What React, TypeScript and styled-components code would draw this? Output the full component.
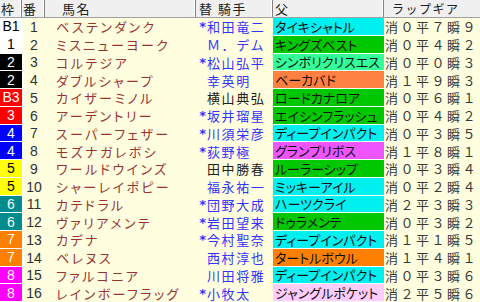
import React from "react";
import styled, { createGlobalStyle } from "styled-components";

const Global = createGlobalStyle`
  html, body { margin: 0; padding: 0; background: #ffffe0; }
  body { font-family: "Noto Sans CJK JP", "Noto Sans", sans-serif; }
`;

const COLS = "22px 23px 151px 77px 111px 96px";

const Table = styled.div`
  width: 480px;
  height: 302px;
  overflow: hidden;
  background: #ffffe0;
  font-family: "Noto Sans CJK JP", sans-serif;
`;

const HeaderRow = styled.div`
  display: grid;
  grid-template-columns: ${COLS};
  height: 17px;
  background: #f0f0f0;
  border-bottom: 1px solid #a0a0a0;
`;

const HeadCell = styled.div<{ $pad?: number; $size?: number; $last?: boolean }>`
  display: flex;
  align-items: center;
  padding-left: ${(p) => p.$pad ?? 2}px;
  font-size: ${(p) => p.$size ?? 13}px;
  letter-spacing: 1.5px;
  color: #202020;
  line-height: 1;
  white-space: nowrap;
  overflow: hidden;
  border-right: ${(p) => (p.$last ? "none" : "1px solid #808080")};
  box-shadow: ${(p) => (p.$last ? "none" : "inset -1px 0 0 #ffffff")};
`;

const Row = styled.div`
  display: grid;
  grid-template-columns: ${COLS};
  height: 17.75px;
`;

const Waku = styled.div<{ $bg: string; $fg: string }>`
  background: ${(p) => p.$bg};
  color: ${(p) => p.$fg};
  border-bottom: 1px solid #ffffff;
  font-family: "Liberation Sans", "Noto Sans", sans-serif;
  font-size: 14px;
  display: flex;
  align-items: center;
  justify-content: center;
  line-height: 1;
`;

const Num = styled.div`
  border-left: 1px solid #ffffff;
  font-family: "Liberation Sans", "Noto Sans", sans-serif;
  font-size: 14px;
  color: #303030;
  display: flex;
  align-items: center;
  justify-content: center;
  line-height: 1;
`;

const Name = styled.div`
  color: #993333;
  font-size: 13px;
  font-feature-settings: "palt";
  letter-spacing: 2.4px;
  padding-left: 11px;
  display: flex;
  align-items: center;
  white-space: nowrap;
  overflow: hidden;
  line-height: 1;
`;

const Jockey = styled.div<{ $black?: boolean }>`
  display: grid;
  grid-template-columns: 11px 1fr;
  align-items: center;
  color: ${(p) => (p.$black ? "#202020" : "#3333ff")};
  font-size: 13px;
  letter-spacing: 1.6px;
  white-space: nowrap;
  overflow: hidden;
  line-height: 1;
`;

const Mark = styled.span`
  display: block;
  font-family: "DejaVu Sans", sans-serif;
  font-size: 13px;
  font-weight: bold;
  line-height: 1;
  letter-spacing: 0;
  text-align: right;
  padding-right: 1px;
`;

const Sire = styled.div<{ $bg: string }>`
  background: ${(p) => p.$bg};
  border-bottom: 1px solid #f4fff4;
  color: #101010;
  font-size: 13px;
  font-feature-settings: "palt";
  letter-spacing: 0;
  padding-left: 2px;
  display: flex;
  align-items: center;
  white-space: nowrap;
  overflow: hidden;
  line-height: 1;
`;

const Gear = styled.div`
  color: #383838;
  font-size: 13px;
  letter-spacing: 2.5px;
  padding-left: 1px;
  display: flex;
  align-items: center;
  white-space: nowrap;
  overflow: hidden;
  line-height: 1;
`;

const WAKU: Record<string, [string, string]> = {
  "1": ["#ffffff", "#000000"],
  "2": ["#000000", "#ffffff"],
  "3": ["#ff0000", "#ffffff"],
  "4": ["#0000ff", "#ffffff"],
  "5": ["#ffff00", "#000000"],
  "6": ["#008c8c", "#ffffff"],
  "7": ["#ff8000", "#ffffff"],
  "8": ["#ff00ff", "#ffffff"],
};

const CY = "#00f0f0";
const GR = "#00c800";

type H = {
  w: string;
  label: string;
  name: string;
  mark: boolean;
  jockey: string;
  black?: boolean;
  sire: string;
  sc: string;
  gear: string;
};

const rows: H[] = [
  { w: "1", label: "B1", name: "ベステンダンク", mark: true, jockey: "和田竜二", sire: "タイキシャトル", sc: CY, gear: "消０平７瞬９" },
  { w: "1", label: "1", name: "ミスニューヨーク", mark: false, jockey: "Ｍ．デム", sire: "キングズベスト", sc: GR, gear: "消０平４瞬２" },
  { w: "2", label: "2", name: "コルテジア", mark: true, jockey: "松山弘平", sire: "シンボリクリスエス", sc: "#33ff99", gear: "消０平０瞬３" },
  { w: "2", label: "2", name: "ダブルシャープ", mark: false, jockey: "幸英明", sire: "ベーカバド", sc: "#ff8040", gear: "消１平９瞬３" },
  { w: "3", label: "B3", name: "カイザーミノル", mark: false, jockey: "横山典弘", black: true, sire: "ロードカナロア", sc: GR, gear: "消０平６瞬１" },
  { w: "3", label: "3", name: "アーデントリー", mark: true, jockey: "坂井瑠星", sire: "エイシンフラッシュ", sc: GR, gear: "消０平４瞬２" },
  { w: "4", label: "4", name: "スーパーフェザー", mark: true, jockey: "川須栄彦", sire: "ディープインパクト", sc: CY, gear: "消０平３瞬５" },
  { w: "4", label: "4", name: "モズナガレボシ", mark: true, jockey: "荻野極", sire: "グランプリボス", sc: "#ee55ff", gear: "消１平８瞬１" },
  { w: "5", label: "5", name: "ワールドウインズ", mark: false, jockey: "田中勝春", black: true, sire: "ルーラーシップ", sc: GR, gear: "消０平３瞬４" },
  { w: "5", label: "5", name: "シャーレイポピー", mark: false, jockey: "福永祐一", sire: "ミッキーアイル", sc: CY, gear: "消０平２瞬４" },
  { w: "6", label: "6", name: "カテドラル", mark: true, jockey: "団野大成", sire: "ハーツクライ", sc: CY, gear: "消２平３瞬３" },
  { w: "6", label: "6", name: "ヴァリアメンテ", mark: true, jockey: "岩田望来", sire: "ドゥラメンテ", sc: GR, gear: "消０平３瞬２" },
  { w: "7", label: "7", name: "カデナ", mark: true, jockey: "今村聖奈", sire: "ディープインパクト", sc: CY, gear: "消１平１瞬５" },
  { w: "7", label: "7", name: "ベレヌス", mark: false, jockey: "西村淳也", sire: "タートルボウル", sc: "#ff8000", gear: "消１平４瞬１" },
  { w: "8", label: "8", name: "ファルコニア", mark: false, jockey: "川田将雅", sire: "ディープインパクト", sc: CY, gear: "消０平３瞬６" },
  { w: "8", label: "8", name: "レインボーフラッグ", mark: true, jockey: "小牧太", sire: "ジャングルポケット", sc: "#ffccff", gear: "消２平５瞬６" },
];

export default function App() {
  return (
    <>
      <Global />
      <Table>
        <HeaderRow>
          <HeadCell $pad={1}>枠</HeadCell>
          <HeadCell $pad={1}>番</HeadCell>
          <HeadCell $pad={17}>馬名</HeadCell>
          <HeadCell $pad={3}>替 騎手</HeadCell>
          <HeadCell $pad={2}>父</HeadCell>
          <HeadCell $pad={8} $size={12} $last>ラップギア</HeadCell>
        </HeaderRow>
        {rows.map((r, i) => {
          const [bg, fg] = WAKU[r.w];
          return (
            <Row key={i}>
              <Waku $bg={bg} $fg={fg}>{r.label}</Waku>
              <Num>{i + 1}</Num>
              <Name>{r.name}</Name>
              <Jockey $black={r.black}>
                <Mark>{r.mark ? "*" : ""}</Mark>
                <span>{r.jockey}</span>
              </Jockey>
              <Sire $bg={r.sc}>{r.sire}</Sire>
              <Gear>{r.gear}</Gear>
            </Row>
          );
        })}
      </Table>
    </>
  );
}
